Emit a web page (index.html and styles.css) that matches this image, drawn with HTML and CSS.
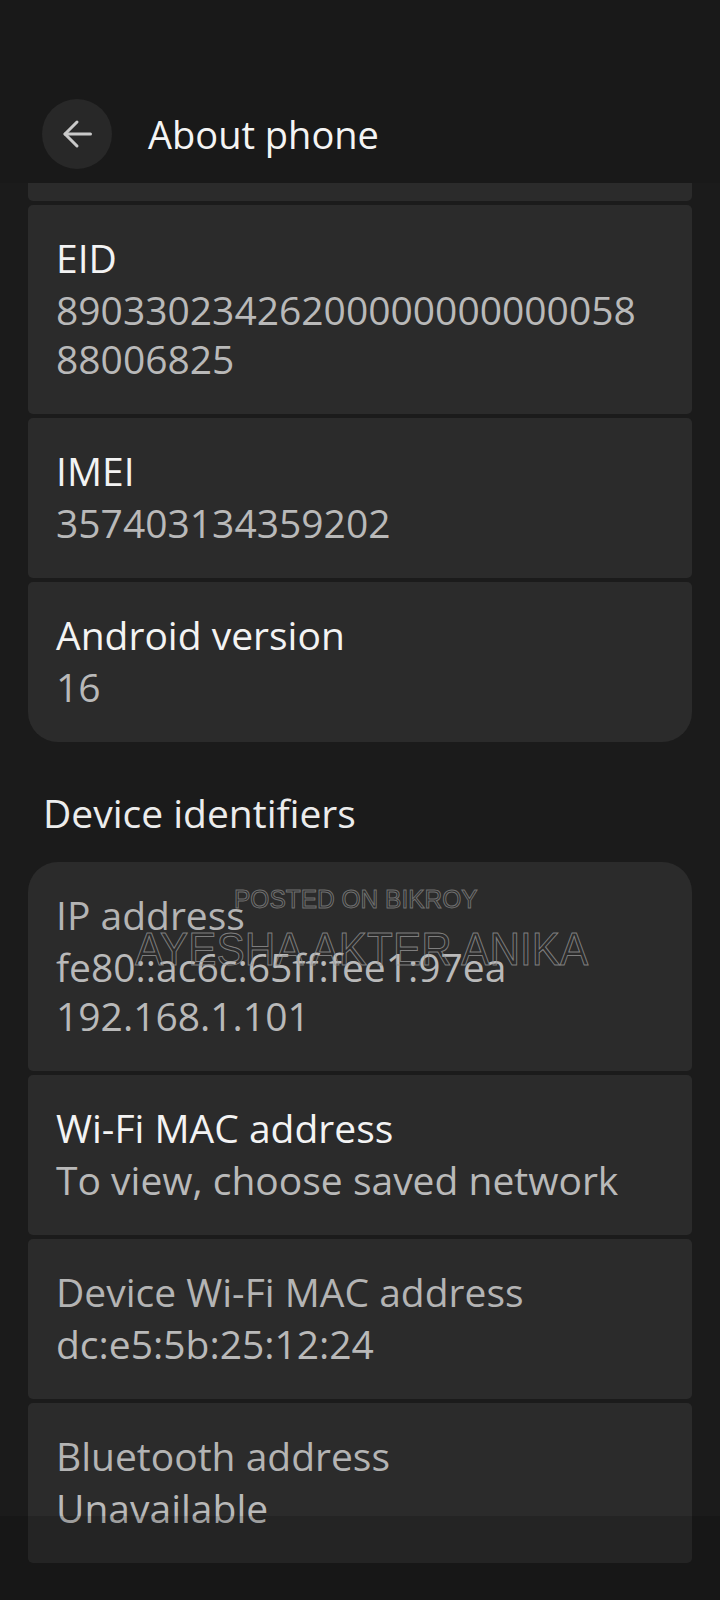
FILE: index.html
```html
<!DOCTYPE html>
<html>

<head>
	<meta charset="UTF-8">
	<title>About phone</title>
	<link rel="stylesheet" href="styles.css">
</head>

<body>
	<header class="topBar">
		<div class="backBtn">
			<svg width="36" height="36" viewBox="0 0 24 24" fill="none" stroke="#c9c9c9" stroke-width="2"
				stroke-linecap="round" stroke-linejoin="round">
				<path d="M21 12H4" />
				<path d="M12 4l-8 8 8 8" />
			</svg>
		</div>
		<h1 class="title">About phone</h1>
	</header>

	<section class="list">
		<div class="card strip"></div>
		<div class="card">
			<div class="label">EID</div>
			<div class="value">89033023426200000000000058</div>
			<div class="value">88006825</div>
		</div>
		<div class="card">
			<div class="label">IMEI</div>
			<div class="value">357403134359202</div>
		</div>
		<div class="card last">
			<div class="label">Android version</div>
			<div class="value">16</div>
		</div>

		<h2 class="groupTitle">Device identifiers</h2>

		<div class="card first">
			<div class="label dim">IP address</div>
			<div class="value">fe80::ac6c:65ff:fee1:97ea</div>
			<div class="value">192.168.1.101</div>
		</div>
		<div class="card">
			<div class="label">Wi-Fi MAC address</div>
			<div class="value">To view, choose saved network</div>
		</div>
		<div class="card">
			<div class="label dim">Device Wi-Fi MAC address</div>
			<div class="value">dc:e5:5b:25:12:24</div>
		</div>
		<div class="card">
			<div class="label dim">Bluetooth address</div>
			<div class="value">Unavailable</div>
		</div>
	</section>

	<!-- watermark over the screenshot -->
	<div class="mark mark1">POSTED ON BIKROY</div>
	<div class="mark mark2">AYESHA AKTER ANIKA</div>

	<div class="navScrim"></div>
</body>

</html>
```

FILE: styles.css
```css
body,
h1,
h2 {
	margin: 0;
}

body {
	position: relative;
	width: 720px;
	min-height: 1600px;
	background-color: #1b1b1b;
	font-family: "Open Sans", "Noto Sans", sans-serif;
	color: #f1f1f1;
	overflow: hidden;
}

.topBar {
	display: flex;
	align-items: center;
	height: 183px;
	padding-top: 85px;
	box-sizing: border-box;
	background-color: #191919;
}

.backBtn {
	display: flex;
	align-items: center;
	justify-content: center;
	width: 70px;
	height: 70px;
	margin-left: 42px;
	border-radius: 50%;
	background-color: #282828;
}

.title {
	margin-left: 36px;
	font-size: 38px;
	font-weight: 400;
	line-height: 50px;
	color: #f4f4f4;
}

.list {
	display: flex;
	flex-direction: column;
	gap: 4px;
	padding: 0 28px;
}

.card {
	padding: 26px 28px 31px;
	border-radius: 5px;
	background-color: #2b2b2b;
}

.card.strip {
	height: 18px;
	padding: 0;
	border-radius: 0 0 5px 5px;
}

.card.last {
	border-radius: 5px 5px 30px 30px;
}

.card.first {
	border-radius: 30px 30px 5px 5px;
}

.label {
	font-size: 39px;
	line-height: 54px;
	color: #f3f3f3;
}

.label.dim {
	color: #b4b4b4;
}

.value {
	font-size: 39px;
	line-height: 49px;
	color: #b9b9b9;
}

.groupTitle {
	margin: 43px 0 21px 15px;
	font-size: 39px;
	font-weight: 400;
	line-height: 48px;
	color: #ececec;
}

.mark {
	position: absolute;
	font-family: "Liberation Sans", Arial, sans-serif;
	color: transparent;
	white-space: nowrap;
	transform-origin: left top;
}

.mark1 {
	left: 234px;
	top: 885px;
	font-size: 25px;
	-webkit-text-stroke: 1px rgba(130, 130, 130, .8);
	transform: scaleX(.98);
}

.mark2 {
	left: 135px;
	top: 922px;
	font-size: 46px;
	-webkit-text-stroke: 1px rgba(150, 150, 150, .8);
	transform: scaleX(.92);
}

.navScrim {
	position: absolute;
	left: 0;
	top: 1516px;
	width: 100%;
	height: 84px;
	background-color: rgba(0, 0, 0, .14);
}
```
